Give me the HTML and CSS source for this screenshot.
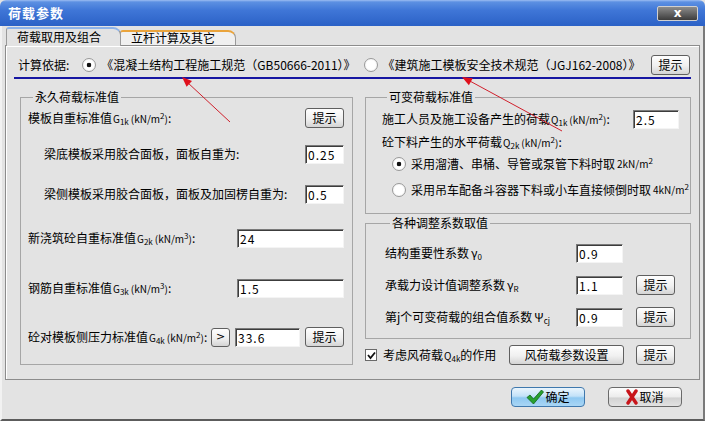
FILE: index.html
```html
<!DOCTYPE html>
<html lang="zh-CN">
<head>
    <meta charset="UTF-8">
    <title>荷载参数</title>
    <link rel="stylesheet" href="styles.css">
</head>
<body>
    <div class="window">
        <!-- Title bar -->
        <div class="titlebar">
            <span class="title">荷载参数</span>
            <button class="close">x</button>
        </div>

        <div class="client">
            <div class="tabs">
                <div class="tab active">荷载取用及组合</div>
                <div class="tab">立杆计算及其它</div>
            </div>

            <div class="panel">
                <div class="basis">
                    <span class="basis-label">计算依据:</span>
                    <label class="radio checked code-a">《混凝土结构工程施工规范（GB50666-2011）》</label>
                    <label class="radio code-b">《建筑施工模板安全技术规范（JGJ162-2008）》</label>
                    <button class="btn hint">提示</button>
                </div>

                <div class="groups">
                    <!-- Permanent loads -->
                    <fieldset class="group group-perm">
                        <legend>永久荷载标准值</legend>
                        <div class="row">
                            <span>模板自重标准值<span class="sym">G<sub>1k</sub></span><span class="unit">(kN/m<sup>2</sup>)</span>:</span>
                            <button class="btn hint">提示</button>
                        </div>
                        <div class="row indent">
                            <span>梁底模板采用胶合面板，面板自重为:</span>
                            <input class="field w-short" value="0.25">
                        </div>
                        <div class="row indent">
                            <span>梁侧模板采用胶合面板，面板及加固楞自重为:</span>
                            <input class="field w-short" value="0.5">
                        </div>
                        <div class="row">
                            <span>新浇筑砼自重标准值<span class="sym">G<sub>2k</sub></span><span class="unit">(kN/m<sup>3</sup>)</span>:</span>
                            <input class="field w-long" value="24">
                        </div>
                        <div class="row">
                            <span>钢筋自重标准值<span class="sym">G<sub>3k</sub></span><span class="unit">(kN/m<sup>3</sup>)</span>:</span>
                            <input class="field w-long" value="1.5">
                        </div>
                        <div class="row">
                            <span>砼对模板侧压力标准值<span class="sym">G<sub>4k</sub></span><span class="unit">(kN/m<sup>2</sup>)</span>:</span>
                            <div class="controls">
                                <button class="btn more">&gt;</button>
                                <input class="field w-mid" value="33.6">
                                <button class="btn hint">提示</button>
                            </div>
                        </div>
                    </fieldset>

                    <div class="right-col">
                        <!-- Variable loads -->
                        <fieldset class="group group-var">
                            <legend>可变荷载标准值</legend>
                            <div class="row">
                                <span>施工人员及施工设备产生的荷载<span class="sym">Q<sub>1k</sub></span><span class="unit">(kN/m<sup>2</sup>)</span>:</span>
                                <input class="field w-var" value="2.5">
                            </div>
                            <div class="row">
                                <span>砼下料产生的水平荷载<span class="sym">Q<sub>2k</sub></span><span class="unit">(kN/m<sup>2</sup>)</span>:</span>
                            </div>
                            <div class="row option">
                                <label class="radio checked">采用溜漕、串桶、导管或泵管下料时取<span class="unit">2kN/m<sup>2</sup></span></label>
                            </div>
                            <div class="row option">
                                <label class="radio">采用吊车配备斗容器下料或小车直接倾倒时取<span class="unit">4kN/m<sup>2</sup></span></label>
                            </div>
                        </fieldset>

                        <!-- Adjustment factors -->
                        <fieldset class="group group-coef">
                            <legend>各种调整系数取值</legend>
                            <div class="coef-row">
                                <span>结构重要性系数<span class="greek">γ<sub>0</sub></span></span>
                                <input class="field" value="0.9">
                                <span></span>
                            </div>
                            <div class="coef-row">
                                <span>承载力设计值调整系数<span class="greek">γ<sub>R</sub></span></span>
                                <input class="field" value="1.1">
                                <button class="btn hint">提示</button>
                            </div>
                            <div class="coef-row">
                                <span>第j个可变荷载的组合值系数<span class="greek">Ψ<sub>cj</sub></span></span>
                                <input class="field" value="0.9">
                                <button class="btn hint">提示</button>
                            </div>
                        </fieldset>

                        <div class="wind-row">
                            <span class="checkbox">
                                <svg width="9" height="9" viewBox="0 0 9 9"><polyline points="1,4 3.5,7 8,1.5" fill="none" stroke="#111" stroke-width="1.8"/></svg>
                            </span>
                            <span>考虑风荷载<span class="sym">Q<sub>4k</sub></span>的作用</span>
                            <button class="btn wind">风荷载参数设置</button>
                            <button class="btn hint">提示</button>
                        </div>
                    </div>
                </div>
            </div>

            <div class="footer">
                <button class="btn ok">
                    <svg width="18" height="16" viewBox="0 0 18 16"><polygon points="1,8.5 4,6 7.5,10 15.5,1 17.5,3 7.5,15" fill="#27a130" stroke="#12651a" stroke-width="0.8"/></svg>
                    确定
                </button>
                <button class="btn cancel">
                    <svg width="12" height="16" viewBox="0 0 12 16"><path d="M2 2 L10 14 M10 2 L2 14" stroke="#c8141a" stroke-width="3.4" stroke-linecap="round"/></svg>
                    取消
                </button>
            </div>
        </div>

        <!-- Red annotation arrows -->
        <svg class="arrows" width="705" height="421" viewBox="0 0 705 421">
            <line x1="230" y1="122" x2="187" y2="82" stroke="#d0202c" stroke-width="1"/>
            <polygon points="182,77 192,81 186.6,86.7" fill="#e0101c"/>
            <line x1="562" y1="131" x2="468" y2="80" stroke="#d0202c" stroke-width="1"/>
            <polygon points="462,77 472.7,78.2 468.9,85.3" fill="#e0101c"/>
        </svg>
    </div>
</body>
</html>
```

FILE: styles.css
```css
* {
    box-sizing: border-box;
}

body {
    margin: 0;
    font-family: "Noto Sans CJK SC", "Noto Sans", sans-serif;
    font-size: 12px;
    line-height: 14px;
    color: #000;
    background: #e3e3e3;
}

.window {
    position: relative;
    width: 705px;
    height: 421px;
    display: flex;
    flex-direction: column;
    background: #e3e3e3;
}

/* Title bar */
.titlebar {
    height: 26px;
    flex: none;
    display: flex;
    align-items: center;
    justify-content: space-between;
    padding: 0 7px 0 8px;
    background: linear-gradient(#9cbdf2 0, #5c90e2 2px, #3f76d7 40%, #2b61c6 100%);
    border-radius: 6px 6px 0 0;
}

.title {
    color: #fff;
    font-weight: bold;
    font-size: 13px;
    letter-spacing: 1px;
}

.close {
    width: 41px;
    height: 15px;
    padding: 0;
    border: 1px solid #d0d0d0;
    border-radius: 2px;
    background: linear-gradient(#8c8c8c, #3c3c3c);
    color: #fff;
    font: bold 12px "DejaVu Sans", sans-serif;
    line-height: 12px;
}

/* Client area */
.client {
    flex: 1;
    padding: 1px 3px 0 3px;
    border-left: 2px solid #f2f2f2;
    border-right: 2px solid #7a7a7a;
    border-bottom: 2px solid #5c5c5c;
}

.tabs {
    display: flex;
    align-items: flex-end;
    height: 18px;
    padding-left: 1px;
}

.tab {
    height: 15px;
    padding: 0 20px 0 10px;
    border: 1px solid #9a9a9a;
    border-top: 2px solid #eaa43c;
    border-bottom: none;
    border-radius: 3px 8px 0 0;
    background: #f0f0f0;
    line-height: 12px;
    margin-left: -1px;
}

.tab.active {
    position: relative;
    z-index: 1;
    height: 19px;
    margin-left: 0;
    margin-bottom: -1px;
    padding: 0 19px 0 10px;
    background: #e3e3e3;
    border-top-color: #8db3ea;
    line-height: 15px;
}

.panel {
    border: 1px solid #8c8c8c;
    box-shadow: inset 1px 1px 0 #fff;
    padding: 0 8px 14px 8px;
}

/* Calculation basis row */
.basis {
    display: flex;
    align-items: center;
    height: 25px;
    margin-top: 8px;
    padding: 0 1px 2px 4px;
    border-bottom: 2px solid #1616a2;
}

.basis .radio.code-a {
    margin-left: 13px;
}

.basis .radio.code-b {
    margin-left: 8px;
}

.basis .hint {
    margin-left: auto;
}

/* Radio buttons */
.radio {
    display: flex;
    align-items: center;
    white-space: nowrap;
}

.radio::before {
    content: "";
    width: 12px;
    height: 12px;
    margin-right: 5px;
    flex: none;
    border-radius: 50%;
    border: 1px solid #9a9a9a;
    background: radial-gradient(circle, #fff 50%, #e4e4e4 100%);
}

.radio.checked::before {
    background: radial-gradient(circle, #111 0, #111 2px, #fff 2.6px, #fff 50%, #e4e4e4 100%);
}

/* Buttons */
.btn {
    height: 20px;
    padding: 0;
    border: 1px solid #5f5f5f;
    border-radius: 3px;
    background: linear-gradient(#fefefe, #f0f0f0 55%, #d4d4d4);
    font: 12px "Noto Sans CJK SC", sans-serif;
    line-height: 14px;
    color: #000;
}

.hint {
    width: 39px;
}

.more {
    width: 19px;
    height: 19px;
    font-family: "DejaVu Sans", sans-serif;
    font-size: 11px;
}

.wind {
    width: 115px;
    margin-left: auto;
}

/* Inputs */
.field {
    height: 19px;
    padding: 0 2px;
    border: 1px solid;
    border-color: #7a7a7a #f4f4f4 #f4f4f4 #7a7a7a;
    box-shadow: inset 1px 1px 0 #3c3c3c;
    background: #fff;
    font: 12px "Noto Sans CJK SC", sans-serif;
    letter-spacing: 1px;
    color: #000;
    outline: none;
}

.w-short { width: 39px; }
.w-long { width: 107px; }
.w-mid { width: 65px; }
.w-var { width: 46px; }

/* Symbols */
.sym {
    font-size: 10px;
    margin-left: 1px;
}

.unit {
    font-size: 10px;
    margin-left: 2px;
}

.greek {
    font-size: 12px;
    margin-left: 2px;
}

sub {
    font-size: 8px;
    vertical-align: -2px;
    line-height: 0;
}

sup {
    font-size: 8px;
    vertical-align: 4px;
    line-height: 0;
}

/* Groups */
.groups {
    display: flex;
    gap: 12px;
    margin-top: 11px;
    padding-left: 6px;
}

.group {
    margin: 0;
    min-width: 0;
    border: 1px solid #a6a6a6;
}

.group legend {
    margin-left: 5px;
    padding: 0 2px;
    line-height: 14px;
}

.row {
    display: flex;
    align-items: center;
    justify-content: space-between;
    height: 20px;
    white-space: nowrap;
}

.group-perm {
    width: 342px;
    padding: 4px 8px 16px 7px;
}

.group-perm .row.indent {
    padding-left: 16px;
}

.group-perm .row:nth-of-type(2) { margin-top: 16px; }
.group-perm .row:nth-of-type(3) { margin-top: 20px; }
.group-perm .row:nth-of-type(4) { margin-top: 24px; }
.group-perm .row:nth-of-type(5) { margin-top: 30px; }
.group-perm .row:nth-of-type(6) { margin-top: 29px; }

.controls {
    display: flex;
    align-items: center;
    gap: 5px;
}

.right-col {
    width: 326px;
    display: flex;
    flex-direction: column;
}

.group-var {
    padding: 5px 11px 13px 16px;
}

.group-var .row:nth-of-type(2) { margin-top: 3px; }
.group-var .row:nth-of-type(3) { margin-top: 2px; }
.group-var .row:nth-of-type(4) { margin-top: 6px; }

.group-var .row.option {
    padding-left: 10px;
}

.group-coef {
    margin-top: 2px;
    padding: 0 15px 11px 19px;
}

.coef-row {
    display: grid;
    grid-template-columns: 1fr 47px 39px;
    column-gap: 13px;
    align-items: center;
    height: 20px;
    margin-top: 12px;
    white-space: nowrap;
}

.coef-row:first-of-type {
    margin-top: 13px;
}

.wind-row {
    display: flex;
    align-items: center;
    gap: 6px;
    height: 20px;
    margin-top: 6px;
    padding-right: 16px;
    white-space: nowrap;
}

.wind-row .hint {
    margin-left: 6px;
}

.checkbox {
    width: 12px;
    height: 12px;
    flex: none;
    display: flex;
    align-items: center;
    justify-content: center;
    border: 1px solid #6a6a6a;
    background: #fff;
}

/* Footer buttons */
.footer {
    display: flex;
    justify-content: flex-end;
    gap: 23px;
    margin-top: 7px;
    padding-right: 18px;
}

.ok,
.cancel {
    width: 74px;
    display: flex;
    align-items: center;
    justify-content: center;
    gap: 1px;
    border-radius: 4px;
}

.ok {
    border-color: #3f78ad;
    background: linear-gradient(#eaf5fd, #c3e2f8 45%, #8ec8f1 55%, #a9d6f5);
}

.cancel {
    border-color: #6a6a6a;
    background: linear-gradient(#fdfdfd, #ececec 50%, #d2d2d2 55%, #e2e2e2);
}

.arrows {
    position: absolute;
    top: 0;
    left: 0;
    pointer-events: none;
}
```
